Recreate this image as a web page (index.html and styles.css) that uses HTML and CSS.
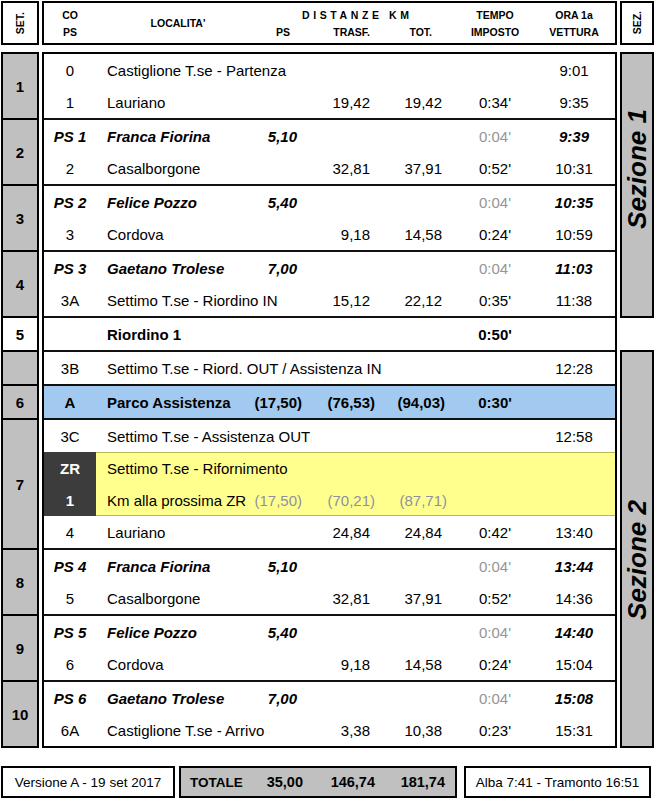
FILE: index.html
```html
<!DOCTYPE html>
<html lang="it">
<head>
<meta charset="utf-8">
<title>Tabella Tempi e Distanze</title>
<link rel="stylesheet" href="styles.css">
</head>
<body>
<div class="page">
  <div class="hdr">
    <div class="set-h"><span class="vt">SET.</span></div>
    <div class="main-h cols">
      <div class="h-co1">CO</div>
      <div class="h-co2">PS</div>
      <div class="h-loc">LOCALITA'</div>
      <div class="h-dist">DISTANZE KM</div>
      <div class="h-ps">PS</div>
      <div class="h-tr">TRASF.</div>
      <div class="h-tot">TOT.</div>
      <div class="h-tm1">TEMPO</div>
      <div class="h-tm2">IMPOSTO</div>
      <div class="h-or1">ORA 1a</div>
      <div class="h-or2">VETTURA</div>
    </div>
    <div class="sez-h"><span class="vt">SEZ.</span></div>
  </div>

  <div class="body">
    <div class="setcol">
      <div class="sc h2">1</div>
      <div class="sc h2">2</div>
      <div class="sc h2">3</div>
      <div class="sc h2">4</div>
      <div class="sc h1 white">5</div>
      <div class="sc h1"></div>
      <div class="sc h1">6</div>
      <div class="sc h4">7</div>
      <div class="sc h2">8</div>
      <div class="sc h2">9</div>
      <div class="sc h2">10</div>
    </div>

    <div class="main">
      <div class="g">
        <div class="row cols"><span class="co">0</span><span class="loc">Castiglione T.se - Partenza</span><span></span><span></span><span></span><span></span><span class="ora">9:01</span></div>
        <div class="row cols"><span class="co">1</span><span class="loc">Lauriano</span><span></span><span class="num">19,42</span><span class="num">19,42</span><span class="tm">0:34'</span><span class="ora">9:35</span></div>
      </div>
      <div class="g">
        <div class="row cols ps"><span class="co">PS 1</span><span class="loc">Franca Fiorina</span><span class="num">5,10</span><span></span><span></span><span class="tm">0:04'</span><span class="ora">9:39</span></div>
        <div class="row cols"><span class="co">2</span><span class="loc">Casalborgone</span><span></span><span class="num">32,81</span><span class="num">37,91</span><span class="tm">0:52'</span><span class="ora">10:31</span></div>
      </div>
      <div class="g">
        <div class="row cols ps"><span class="co">PS 2</span><span class="loc">Felice Pozzo</span><span class="num">5,40</span><span></span><span></span><span class="tm">0:04'</span><span class="ora">10:35</span></div>
        <div class="row cols"><span class="co">3</span><span class="loc">Cordova</span><span></span><span class="num">9,18</span><span class="num">14,58</span><span class="tm">0:24'</span><span class="ora">10:59</span></div>
      </div>
      <div class="g">
        <div class="row cols ps"><span class="co">PS 3</span><span class="loc">Gaetano Trolese</span><span class="num">7,00</span><span></span><span></span><span class="tm">0:04'</span><span class="ora">11:03</span></div>
        <div class="row cols"><span class="co">3A</span><span class="loc">Settimo T.se - Riordino IN</span><span></span><span class="num">15,12</span><span class="num">22,12</span><span class="tm">0:35'</span><span class="ora">11:38</span></div>
      </div>
      <div class="g">
        <div class="row cols rio"><span class="co"></span><span class="loc">Riordino 1</span><span></span><span></span><span></span><span class="tm">0:50'</span><span class="ora"></span></div>
      </div>
      <div class="g">
        <div class="row cols"><span class="co">3B</span><span class="loc">Settimo T.se - Riord. OUT / Assistenza IN</span><span></span><span></span><span></span><span></span><span class="ora">12:28</span></div>
      </div>
      <div class="g">
        <div class="row cols blue"><span class="co">A</span><span class="loc">Parco Assistenza</span><span class="num"><span class="hang">(17,50)</span></span><span class="num"><span class="hang">(76,53)</span></span><span class="num"><span class="hang3">(94,03)</span></span><span class="tm">0:30'</span><span class="ora"></span></div>
      </div>
      <div class="g">
        <div class="row cols"><span class="co">3C</span><span class="loc">Settimo T.se - Assistenza OUT</span><span></span><span></span><span></span><span></span><span class="ora">12:58</span></div>
        <div class="zr">
          <div class="row cols"><span class="co dark">ZR</span><span class="loc">Settimo T.se - Rifornimento</span></div>
          <div class="row cols"><span class="co dark">1</span><span class="loc">Km alla prossima ZR</span><span class="num gp"><span class="hang">(17,50)</span></span><span class="num gp"><span class="hang">(70,21)</span></span><span class="num gp"><span class="hang">(87,71)</span></span></div>
        </div>
        <div class="row cols"><span class="co">4</span><span class="loc">Lauriano</span><span></span><span class="num">24,84</span><span class="num">24,84</span><span class="tm">0:42'</span><span class="ora">13:40</span></div>
      </div>
      <div class="g">
        <div class="row cols ps"><span class="co">PS 4</span><span class="loc">Franca Fiorina</span><span class="num">5,10</span><span></span><span></span><span class="tm">0:04'</span><span class="ora">13:44</span></div>
        <div class="row cols"><span class="co">5</span><span class="loc">Casalborgone</span><span></span><span class="num">32,81</span><span class="num">37,91</span><span class="tm">0:52'</span><span class="ora">14:36</span></div>
      </div>
      <div class="g">
        <div class="row cols ps"><span class="co">PS 5</span><span class="loc">Felice Pozzo</span><span class="num">5,40</span><span></span><span></span><span class="tm">0:04'</span><span class="ora">14:40</span></div>
        <div class="row cols"><span class="co">6</span><span class="loc">Cordova</span><span></span><span class="num">9,18</span><span class="num">14,58</span><span class="tm">0:24'</span><span class="ora">15:04</span></div>
      </div>
      <div class="g">
        <div class="row cols ps"><span class="co">PS 6</span><span class="loc">Gaetano Trolese</span><span class="num">7,00</span><span></span><span></span><span class="tm">0:04'</span><span class="ora">15:08</span></div>
        <div class="row cols"><span class="co">6A</span><span class="loc">Castiglione T.se - Arrivo</span><span></span><span class="num">3,38</span><span class="num">10,38</span><span class="tm">0:23'</span><span class="ora">15:31</span></div>
      </div>
    </div>

    <div class="sezcol">
      <div class="sez sez1"><span class="sezt">Sezione 1</span></div>
      <div class="sez-gap"></div>
      <div class="sez sez2"><span class="sezt">Sezione 2</span></div>
    </div>
  </div>

  <div class="foot">
    <div class="ver">Versione A - 19 set 2017</div>
    <div class="totbox">
      <span class="tlab">TOTALE</span>
      <span class="tnum">35,00</span>
      <span class="tnum">146,74</span>
      <span class="tnum">181,74</span>
    </div>
    <div class="alba">Alba 7:41 - Tramonto 16:51</div>
  </div>
</div>
</body>
</html>
```

FILE: styles.css
```css
* {
  box-sizing: border-box;
  margin: 0;
  padding: 0;
}

body {
  margin: 0;
  background: #fff;
  color: #000;
  font-family: "Liberation Sans", Arial, sans-serif;
}

.page {
  width: 655px;
  height: 800px;
  padding: 1px 0 0 1px;
}

/* shared column grid */
.cols {
  display: grid;
  grid-template-columns: 52px 144px 57px 73px 72px 106px 52px 15px;
}

/* ---------- header ---------- */
.hdr {
  display: flex;
  gap: 3px;
  height: 44px;
  margin-bottom: 7px;
}

.set-h,
.sez-h {
  border: 2px solid #000;
  display: flex;
  align-items: center;
  justify-content: center;
}

.set-h { width: 38px; }
.sez-h { width: 34px; }

.vt {
  writing-mode: vertical-rl;
  transform: rotate(180deg);
  font-weight: bold;
  font-size: 10.5px;
  line-height: 1;
}

.main-h {
  width: 575px;
  border: 2px solid #000;
  grid-template-rows: 17px 17px;
  padding-top: 3px;
  font-size: 10.5px;
  font-weight: bold;
  align-items: center;
  white-space: nowrap;
}

.h-co1 { grid-column: 1; grid-row: 1; text-align: center; }
.h-co2 { grid-column: 1; grid-row: 2; text-align: center; }
.h-loc { grid-column: 2; grid-row: 1 / 3; text-align: center; padding-left: 20px; }
.h-dist { grid-column: 3 / 6; grid-row: 1; padding-left: 62px; letter-spacing: 3.6px; }
.h-ps { grid-column: 3; grid-row: 2; text-align: right; padding-right: 7px; }
.h-tr { grid-column: 4; grid-row: 2; text-align: right; }
.h-tot { grid-column: 5; grid-row: 2; text-align: right; padding-right: 10px; }
.h-tm1 { grid-column: 6; grid-row: 1; text-align: center; }
.h-tm2 { grid-column: 6; grid-row: 2; text-align: center; }
.h-or1 { grid-column: 7; grid-row: 1; text-align: center; }
.h-or2 { grid-column: 7; grid-row: 2; text-align: center; }

/* ---------- body ---------- */
.body {
  display: flex;
  gap: 3px;
}

.setcol {
  width: 38px;
  border: 2px solid #000;
  display: flex;
  flex-direction: column;
}

.sc {
  box-sizing: content-box;
  background: #c0c0c0;
  display: flex;
  align-items: center;
  justify-content: center;
  font-weight: bold;
  font-size: 15px;
}

.sc + .sc { border-top: 2px solid #000; }
.sc.white { background: #fff; }

.h1 { height: 32px; }
.h2 { height: 64px; }
.h4 { height: 128px; }

.main {
  width: 575px;
  border: 2px solid #000;
}

.g + .g { border-top: 2px solid #111; }

.row {
  height: 32px;
  align-items: center;
  font-size: 15px;
  white-space: nowrap;
}

.co { text-align: center; }
.loc { padding-left: 11px; }
.num { text-align: right; }
.tm { text-align: center; }
.ora { text-align: center; }

.hang { margin-right: -5px; }
.hang3 { margin-right: -3px; }

.ps .co,
.ps .loc,
.ps .num,
.ps .ora {
  font-weight: bold;
  font-style: italic;
}

.ps .tm { color: #959595; }

.rio .loc,
.rio .tm { font-weight: bold; }

.blue {
  background: #a2c9ef;
  font-weight: bold;
}

.zr {
  background: #ffff8e;
  box-shadow: inset 0 1px 0 #b9b95a, inset 0 -1px 0 #b9b95a;
}

.co.dark {
  align-self: stretch;
  display: flex;
  align-items: center;
  justify-content: center;
  background: #3c3c3c;
  color: #fff;
  font-weight: bold;
}

.gp { color: #8f8fa2; }

/* ---------- sezione column ---------- */
.sezcol {
  width: 34px;
  display: flex;
  flex-direction: column;
}

.sez {
  box-sizing: content-box;
  border: 2px solid #000;
  background: #c0c0c0;
  display: flex;
  align-items: center;
  justify-content: center;
}

.sez1 { height: 262px; }
.sez2 { height: 394px; }
.sez-gap { height: 32px; }

.sez1 .sezt { margin-bottom: 32px; }
.sez2 .sezt { margin-top: 22px; }

.sezt {
  writing-mode: vertical-rl;
  transform: rotate(180deg);
  font-weight: bold;
  font-style: italic;
  font-size: 26px;
  line-height: 1;
  white-space: nowrap;
}

/* ---------- footer ---------- */
.foot {
  display: flex;
  margin-top: 18px;
  height: 32px;
}

.ver,
.alba {
  border: 2px solid #000;
  display: flex;
  align-items: center;
  justify-content: center;
  font-size: 13.5px;
  white-space: nowrap;
}

.ver { width: 174px; }

.alba {
  width: 187px;
  margin-left: 7px;
}

.totbox {
  width: 278px;
  margin-left: 4px;
  border: 2px solid #000;
  background: #c0c0c0;
  display: grid;
  grid-template-columns: 69px 53px 72px 70px;
  align-items: center;
  font-weight: bold;
  white-space: nowrap;
}

.tlab {
  padding-left: 9px;
  font-size: 13.5px;
}

.tnum {
  text-align: right;
  font-size: 14.5px;
}
```
